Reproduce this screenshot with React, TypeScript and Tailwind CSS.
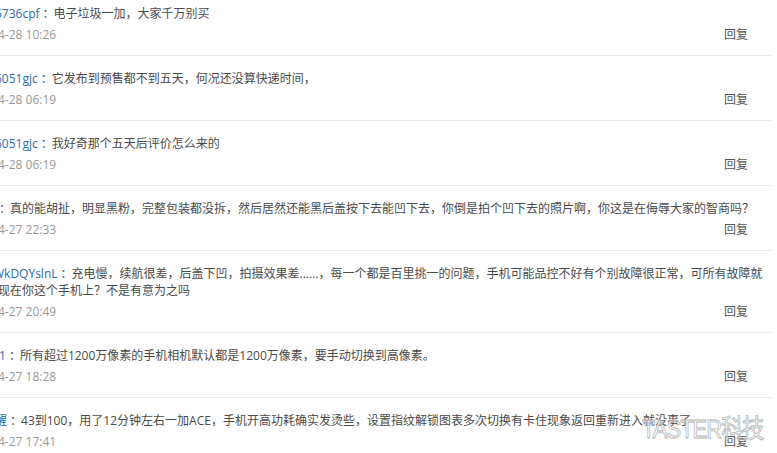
import React from "react";

type Comment = {
  name: string;
  text: React.ReactNode;
  time: string;
  indent: string;
};

const comments: Comment[] = [
  { name: "5736cpf", text: "电子垃圾一加，大家千万别买", time: "4-28 10:26", indent: "-indent-[3px]" },
  { name: "6051gjc", text: "它发布到预售都不到五天，何况还没算快递时间，", time: "4-28 06:19", indent: "-indent-[3px]" },
  { name: "6051gjc", text: "我好奇那个五天后评价怎么来的", time: "4-28 06:19", indent: "-indent-[3px]" },
  {
    name: "",
    text: "真的能胡扯，明显黑粉，完整包装都没拆，然后居然还能黑后盖按下去能凹下去，你倒是拍个凹下去的照片啊，你这是在侮辱大家的智商吗？",
    time: "4-27 22:33",
    indent: "-indent-[2px]",
  },
  {
    name: "WkDQYslnL",
    text: (
      <>
        充电慢，续航很差，后盖下凹，拍摄效果差......，每一个都是百里挑一的问题，手机可能品控不好有个别故障很正常，可所有故障就
        <br />
        现在你这个手机上？不是有意为之吗
      </>
    ),
    time: "4-27 20:49",
    indent: "-indent-[5px]",
  },
  { name: "1", text: "所有超过1200万像素的手机相机默认都是1200万像素，要手动切换到高像素。", time: "4-27 18:28", indent: "indent-[1px]" },
  {
    name: "醒",
    text: "43到100，用了12分钟左右一加ACE，手机开高功耗确实发烫些，设置指纹解锁图表多次切换有卡住现象返回重新进入就没事了",
    time: "4-27 17:41",
    indent: "-indent-[3px]",
  },
];

function CommentRow({ c }: { c: Comment }) {
  return (
    <div className="border-b border-[#ececec] pt-[14px] pb-[11px]">
      <p className={`pr-[4px] text-[12px] leading-[17px] text-[#4a4a4a] ${c.indent}`}>
        {c.name && <span className="text-[#2d6bb0]">{c.name}</span>}
        <span className="pl-[3px] -mr-[1px]">：</span>
        {c.text}
      </p>
      <div className="mt-[4px] flex items-center justify-between text-[12px] leading-[18px]">
        <span className="text-[#999]">{c.time}</span>
        <button className="mr-[24px] text-[#555]">回复</button>
      </div>
    </div>
  );
}

export default function App() {
  return (
    <div className="relative h-[453px] w-[777px] overflow-hidden bg-white font-['Open_Sans','Noto_Sans_CJK_SC',sans-serif]">
      <div className="-mt-[9px] -ml-[2px] mr-[5px]">
        {comments.map((c, i) => (
          <CommentRow key={i} c={c} />
        ))}
      </div>
      <div className="pointer-events-none absolute left-[642px] top-[416px] origin-top-left scale-y-[1.2] text-[22px] leading-none tracking-[-1px] text-white/60 [-webkit-text-stroke:0.7px_#b0b0b0] font-['Liberation_Sans','Noto_Sans_CJK_SC',sans-serif]">
        TASTER科技
      </div>
    </div>
  );
}
